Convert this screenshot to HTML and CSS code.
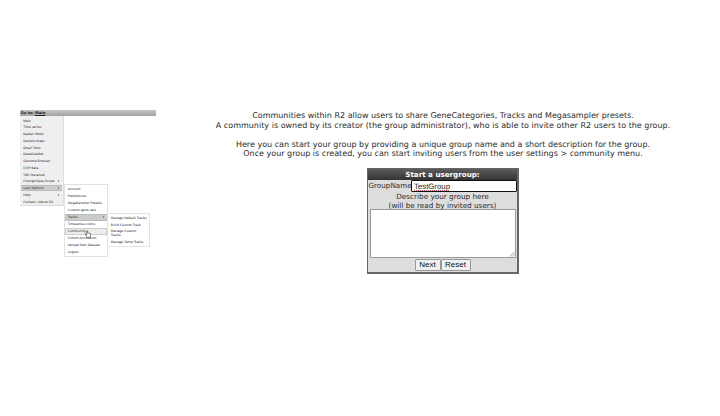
FILE: index.html
```html
<!DOCTYPE html>
<html lang="en">
<head>
<meta charset="utf-8">
<title>Communities</title>
<link rel="stylesheet" href="styles.css">
</head>
<body>
<div class="page">
  <nav class="nav">
    <div class="bar">Go to: <u>Main</u></div>
    <ul class="menu main-menu">
      <li>Main</li><li>Time series</li><li>Kaplan Meier</li><li>Sample maps</li><li>Small Tools</li><li>DataGrabber</li><li>Genome Browser</li><li>ChIP data</li><li>TAR literature</li>
      <li>Change Data Scope<i class="arrow"></i></li>
      <li class="active">User Options<i class="arrow"></i></li>
      <li>Help<i class="arrow"></i></li><li>Contact / About R2</li>
    </ul>
    <ul class="menu sub user-menu">
      <li>Account</li><li>Preferences</li><li>MegaSampler Presets</li><li>Custom gene sets</li>
      <li class="active">Tracks<i class="arrow"></i></li>
      <li>Timeseries colors</li><li class="hover">Community</li><li>Cohort Annotation</li><li>Upload New Dataset</li><li>Logout</li>
    </ul>
    <ul class="menu sub track-menu">
      <li>Manage Default Tracks</li><li>Build Custom Track</li><li class="two">Manage Custom<br>Tracks</li><li>Manage Temp Tracks</li>
    </ul>
    <svg class="cursor" viewBox="0 0 12 16"><path d="M4 15 L1 9.5 Q0 8 1.5 8 L3.5 10 V1.8 Q4.5 0 5.5 1.8 V6 Q7 5 7.5 6.5 Q9 5.5 9.5 7 Q11 6.3 11.2 8 V11 L10 15 Z" fill="#fff" stroke="#333" stroke-width="1.2"/></svg>
  </nav>
  <main class="content">
    <p class="l1">Communities within R2 allow users to share GeneCategories, Tracks and Megasampler presets.</p>
    <p class="l2">A community is owned by its creator (the group administrator), who is able to invite other R2 users to the group.</p>
    <p class="l3">Here you can start your group by providing a unique group name and a short description for the group.</p>
    <p class="l4">Once your group is created, you can start inviting users from the user settings &gt; community menu.</p>
    <form class="form">
      <div class="title">Start a usergroup:</div>
      <div class="row"><span class="label">GroupName</span><div class="input"><span class="value">TestGroup</span></div></div>
      <div class="describe">Describe your group here<br>(will be read by invited users)</div>
      <div class="area"><svg class="grip" viewBox="0 0 7 7"><path d="M.8 6.5 6.5 .8M3.8 6.5 6.5 3.8" stroke="#777" stroke-width=".8"/></svg></div>
      <div class="buttons"><button type="button" class="next">Next</button><button type="button" class="reset">Reset</button></div>
    </form>
  </main>
</div>
</body>
</html>
```
FILE: styles.css
```css
* { box-sizing: border-box; }
body { margin: 0; background: #fff; font-family: "DejaVu Sans", sans-serif; text-rendering: geometricPrecision; }
.page { height: 416px; padding: 110px 0 0 20px; display: flex; overflow: hidden; }
.nav { position: relative; width: 136px; flex: none; color: #222; }
.bar { height: 6px; padding-left: .7px; background: linear-gradient(#c6c6c6, #a2a2a2); font-size: 3.8px; line-height: 6px; font-weight: bold; }
.menu { list-style: none; margin: 0; padding: 0; font-size: 3.15px; white-space: nowrap; }
.main-menu { width: 44px; height: 90px; padding: 1.2px .8px 0 .5px; background: #efefef; border-right: 1px solid #ddd; border-bottom: 1px solid #ddd; }
.menu li { display: flex; align-items: center; justify-content: space-between; height: 7px; padding: 0 2.8px; }
.main-menu li { height: 6.75px; }
.menu .active { background: #cbcbcb; border: solid #bbb; border-width: 1px 0; }
.menu .hover { background: #ededed; border: 1px solid #ccc; padding-left: 1.8px; }
.arrow { width: 1px; height: 2px; background: #888; }
.sub { position: absolute; background: #fff; border: 1px solid #e2e2e2; }
.user-menu { left: 44px; top: 74px; width: 44px; height: 73px; padding: .6px 0 0; }
.track-menu { left: 87px; top: 103px; width: 43px; height: 34px; }
.menu .two { height: 10.8px; line-height: 4px; }
.cursor { position: absolute; left: 65px; top: 120px; width: 6px; height: 8px; }
.content { width: 454px; margin: 1px 0 0 60px; color: #2b2b2b; text-align: center; display: flex; flex-direction: column; align-items: center; }
.content p { margin: 0; font-size: 8px; line-height: 9.6px; white-space: nowrap; }
.content .l2 { letter-spacing: .018px; }
.content .l3 { margin-top: 9.4px; }
.form { width: 152px; height: 106px; margin: 9.2px 0 0; border: 1px solid #666; border-right-width: 2px; border-bottom-width: 2px; background: #ddd; }
.title { height: 11px; background: linear-gradient(#5c5c5c, #333); color: #fff; font-size: 7.15px; line-height: 11px; font-weight: bold; }
.row { display: flex; height: 12px; }
.label { width: 43px; font-size: 7.2px; line-height: 12px; white-space: nowrap; text-align: left; padding-left: .5px; }
.input { flex: none; width: 106px; height: 12px; border: 1.5px solid #111; border-radius: 1px; background: #fff; font: 7.8px/11px "Liberation Sans", sans-serif; text-align: left; padding-left: 2px; }
.value { text-decoration: underline dotted #e05050 1px; text-underline-offset: 1px; text-decoration-skip-ink: none; }
.describe { height: 17.5px; padding-top: 1px; font-size: 7.25px; line-height: 8.8px; }
.area { height: 49px; margin: 0 1px 0 2px; border: 1px solid #999; background: #fff; display: flex; justify-content: flex-end; align-items: flex-end; }
.grip { width: 6px; height: 6px; display: block; }
.buttons { display: flex; justify-content: center; margin-top: 1px; }
.buttons button { height: 12px; padding: 0; border: 1px solid #999; border-radius: 1px; background: #f0f0f0; color: #111; font: 8px/10px "Liberation Sans", sans-serif; }
.next { width: 26px; }
.reset { width: 30px; }
```
